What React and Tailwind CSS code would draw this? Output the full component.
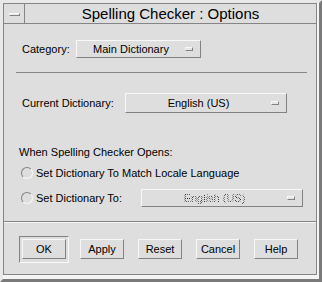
import React from 'react';

// Motif style bevels
const raised = 'border border-t-[#f8f8f8] border-l-[#f8f8f8] border-r-[#828282] border-b-[#828282]';
const sunken = 'border border-t-[#828282] border-l-[#828282] border-r-[#f8f8f8] border-b-[#f8f8f8]';

const Indicator = () => (
  <div className={`w-[8px] h-[4px] bg-[#e6e6e6] ${raised}`} />
);

const OptionMenu = ({ label, width, height, disabled }) => (
  <div className={`${width} ${height} flex items-center ${raised}`}>
    <div className="flex-1 text-center leading-none">
      {disabled ? (
        <span className="bg-[image:repeating-conic-gradient(#2a2a2a_0%_25%,transparent_0%_50%)] bg-[length:2px_2px] bg-clip-text text-transparent">
          {label}
        </span>
      ) : (
        label
      )}
    </div>
    <div className="mr-[7px]">
      <Indicator />
    </div>
  </div>
);

const Radio = ({ children }) => (
  <div className="flex items-center">
    <div className={`w-[12px] h-[12px] rounded-full ${sunken}`} />
    <span className="ml-[3px] leading-none">{children}</span>
  </div>
);

const Button = ({ children }) => (
  <div className={`w-[44px] h-[20px] flex items-center justify-center leading-none ${raised}`}>
    {children}
  </div>
);

const App = () => {
  return (
    <div className="w-[322px] h-[282px] bg-[#dedede] border-[3px] border-t-[#e8e8e8] border-l-[#e8e8e8] border-r-[#7a7a7a] border-b-[#7a7a7a] font-['Liberation_Sans',Arial,sans-serif] text-[11px] text-black overflow-hidden">
      <div className="h-full border-r-2 border-b-4 border-r-[#f4f4f4] border-b-[#f4f4f4]">
        <div className="h-full flex flex-col border border-[#858585]">
          {/* Title bar */}
          <div className="h-[20px] flex border-b border-[#858585] shrink-0">
            <div className="w-[21px] border-r border-[#858585] flex items-center justify-center">
              <div className={`w-[11px] h-[3px] mt-[1px] bg-[#ececec] ${raised}`} />
            </div>
            <div className="flex-1 flex items-center justify-center text-[15px] leading-none">
              Spelling Checker : Options
            </div>
          </div>

          {/* Category */}
          <div className="mt-[16px] ml-[18px] h-[18px] flex items-center">
            <div className="w-[54px] leading-none">Category:</div>
            <OptionMenu label="Main Dictionary" width="w-[125px]" height="h-[18px]" />
          </div>

          <div className="mt-[14px] ml-[12px] w-[291px] h-px bg-[#858585]" />

          {/* Current dictionary */}
          <div className="mt-[20px] ml-[18px] h-[20px] flex items-center">
            <div className="w-[103px] leading-none">Current Dictionary:</div>
            <OptionMenu label="English (US)" width="w-[162px]" height="h-[20px]" />
          </div>

          <div className="mt-[32px] ml-[15px] h-[14px] leading-[14px]">When Spelling Checker Opens:</div>

          <div className="mt-[7px] ml-[17px] h-[14px] flex items-center">
            <Radio>Set Dictionary To Match Locale Language</Radio>
          </div>

          <div className="mt-[9px] ml-[17px] h-[18px] flex items-center">
            <div className="w-[120px]">
              <Radio>Set Dictionary To:</Radio>
            </div>
            <OptionMenu label="English (US)" width="w-[162px]" height="h-[18px]" disabled />
          </div>

          {/* Action area */}
          <div className="mt-[14px] h-px bg-[#858585]" />
          <div className="h-px bg-[#f4f4f4]" />

          <div className="mt-[13px] ml-[15px] flex items-start">
            <div className={`w-[50px] h-[27px] pt-[2px] pl-[2px] ${sunken}`}>
              <Button>OK</Button>
            </div>
            <div className="mt-[3px] ml-[11px] flex gap-[14px]">
              <Button>Apply</Button>
              <Button>Reset</Button>
              <Button>Cancel</Button>
              <Button>Help</Button>
            </div>
          </div>
        </div>
      </div>
    </div>
  );
};

export default App;
